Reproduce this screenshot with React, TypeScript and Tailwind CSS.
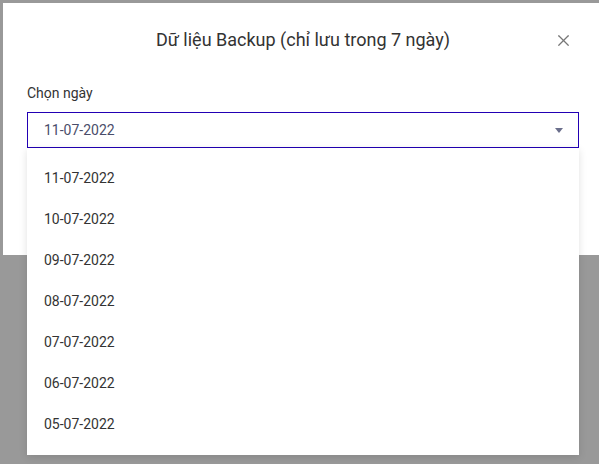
import { X } from 'lucide-react';

const DATES = [
  '11-07-2022',
  '10-07-2022',
  '09-07-2022',
  '08-07-2022',
  '07-07-2022',
  '06-07-2022',
  '05-07-2022',
];

export default function App() {
  return (
    <div
      className="relative h-[464px] w-[599px] overflow-hidden bg-[#999999] pl-[3px] pt-[3px]"
      style={{ fontFamily: 'Roboto, "Noto Sans", sans-serif' }}
    >
      <div className="relative h-[252px] w-[596px] bg-white">
        <div className="flex h-[74px] items-center justify-center pl-[4px]">
          <h2 className="text-[18px] font-normal leading-6 text-[#333333]">
            Dữ liệu Backup (chỉ lưu trong 7 ngày)
          </h2>
        </div>
        <button className="absolute right-[26px] top-[28px] text-[#777777]" aria-label="Close">
          <X className="h-[19px] w-[19px]" strokeWidth={1.5} />
        </button>
        <div className="px-[24px] pt-[6px]">
          <label className="block text-[14px] leading-5 text-[#333333]">Chọn ngày</label>
          <div className="mt-[9px] flex h-[36px] w-[552px] items-center justify-between border border-[#2200b4] pl-[16px] pr-[15px]">
            <span className="text-[14px] text-[#4a4d6a]">11-07-2022</span>
            <svg width="8" height="5" viewBox="0 0 8 5" className="mt-[1px]">
              <path d="M0 0h8L4 5z" fill="#6b6f8c" />
            </svg>
          </div>
        </div>
      </div>
      <ul className="absolute left-[27px] top-[148px] w-[552px] bg-white py-[10px] shadow-[0_2px_8px_rgba(0,0,0,0.12)]">
        {DATES.map((d) => (
          <li key={d} className="flex h-[41px] items-center pl-[17px] text-[14px] text-[#333333]">
            {d}
          </li>
        ))}
      </ul>
    </div>
  );
}
